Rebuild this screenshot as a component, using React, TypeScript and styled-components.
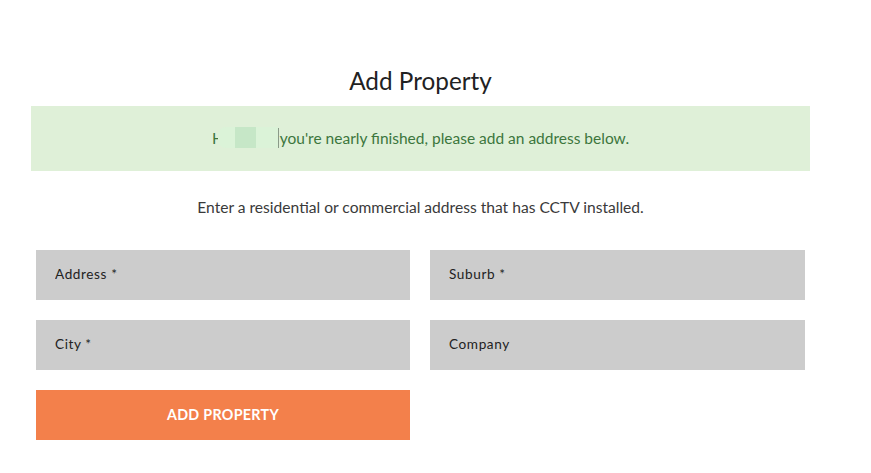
import React from "react";
import styled, { createGlobalStyle } from "styled-components";

const GlobalStyle = createGlobalStyle`
  html, body {
    margin: 0;
    padding: 0;
    background: #ffffff;
    font-family: Lato, "Open Sans", Arial, sans-serif;
  }
  * { box-sizing: border-box; }
`;

const Page = styled.main`
  width: 779px;
  margin-left: 31px;
  padding-top: 66px;
`;

const Title = styled.h1`
  margin: 0 0 10px;
  height: 30px;
  line-height: 30px;
  font-size: 24.3px;
  font-weight: 400;
  color: #222222;
  text-align: center;
`;

const Banner = styled.div`
  height: 65px;
  padding-bottom: 2px;
  background: #dff0d8;
  color: #3c763d;
  font-size: 15.5px;
  line-height: 18px;
  display: flex;
  align-items: center;
  justify-content: center;
`;

const Redact = styled.span`
  display: inline-flex;
  width: 60px;
  height: 21px;
  margin-left: -6px;
  align-self: center;
`;

const RedactBlock = styled.span<{ $w: number; $tone: "light" | "dark"; $round?: boolean }>`
  width: ${(p) => p.$w}px;
  height: 100%;
  background: ${(p) => (p.$tone === "dark" ? "#c6e7c7" : "#dbf3d8")};
  border-radius: ${(p) => (p.$round ? "8px 0 0 8px" : "0")};
`;

const Caret = styled.span`
  width: 1px;
  height: 20px;
  background: #8a9a88;
  margin-right: 1px;
`;

const Lead = styled.p`
  margin: 27px 0 34px;
  font-size: 15.6px;
  line-height: 18px;
  color: #3a3a3a;
  text-align: center;
`;

const Form = styled.form`
  display: grid;
  grid-template-columns: 374px 375px;
  column-gap: 20px;
  row-gap: 20px;
  padding: 0 5px;
`;

const Field = styled.input`
  height: 50px;
  width: 100%;
  border: none;
  outline: none;
  background: #cccccc;
  padding: 0 19px 2px;
  font-family: Lato, "Open Sans", Arial, sans-serif;
  font-size: 13.6px;
  letter-spacing: 0.6px;
  color: #222222;
  &::placeholder {
    color: #222222;
    opacity: 1;
  }
`;

const Submit = styled.button`
  height: 50px;
  width: 100%;
  border: none;
  padding: 0 0 2px;
  background: #f3804b;
  color: #ffffff;
  font-family: Lato, "Open Sans", Arial, sans-serif;
  font-size: 14.3px;
  font-weight: 700;
  letter-spacing: 0.3px;
  text-transform: uppercase;
  cursor: pointer;
`;

export default function App() {
  return (
    <>
      <GlobalStyle />
      <Page>
        <Title>Add Property</Title>
        <Banner>
          H
          <Redact>
            <RedactBlock $w={17} $tone="light" $round />
            <RedactBlock $w={21} $tone="dark" />
            <RedactBlock $w={22} $tone="light" />
          </Redact>
          <Caret />
          you're nearly finished, please add an address below.
        </Banner>
        <Lead>Enter a residential or commercial address that has CCTV installed.</Lead>
        <Form onSubmit={(e) => e.preventDefault()}>
          <Field placeholder="Address *" />
          <Field placeholder="Suburb *" />
          <Field placeholder="City *" />
          <Field placeholder="Company" />
          <Submit type="submit">Add Property</Submit>
        </Form>
      </Page>
    </>
  );
}
